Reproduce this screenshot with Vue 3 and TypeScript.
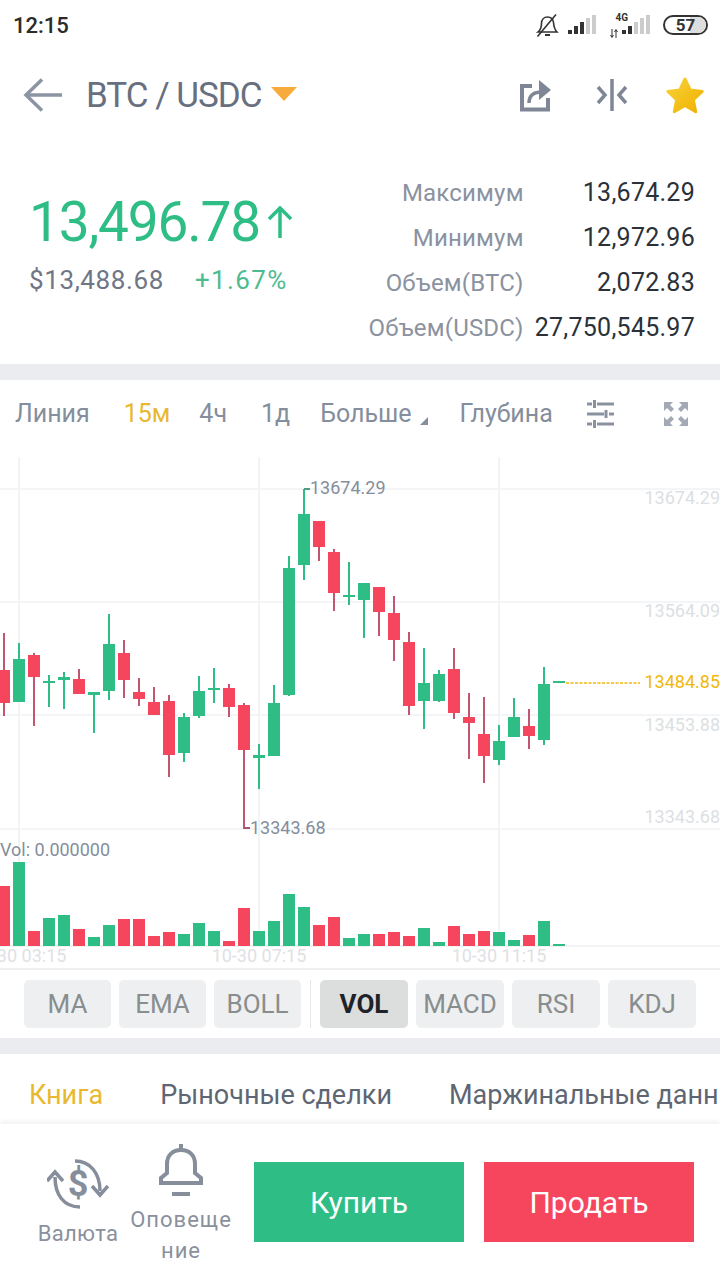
<script setup lang="ts">
interface Candle {
	x: number
	up: boolean
	high: number
	low: number
	top: number
	bottom: number
	vol: number
}

// [up, wick top, wick bottom, body top, body bottom, volume height]
const // prettier-ignore
	raw: [number, number, number, number, number, number][] = [
	[0,633,716,670,703,60],[1,643,702,659,702,84],[0,653,726,655,677,15],[1,675,707,681,683,28],
	[1,672,709,677,680,31],[0,669,694,679,694,17],[1,692,733,692,695,9],[1,614,700,644,691,21],
	[0,640,698,653,680,27],[0,678,706,692,699,27],[0,687,715,702,715,10],[0,695,777,701,755,14],
	[1,713,762,717,753,12],[1,676,718,691,716,23],[1,668,703,688,690,15],[0,684,717,688,707,5],
	[0,703,829,705,750,38],[1,744,789,755,758,15],[1,685,756,703,756,25],[1,556,696,568,695,52],
	[1,489,580,514,565,39],[0,521,561,521,547,21],[0,549,611,552,593,29],[1,562,605,595,597,8],
	[1,583,638,583,600,12],[0,587,636,587,612,12],[0,596,661,613,640,14],[0,632,715,642,706,10],
	[1,648,729,683,701,18],[1,670,702,674,701,4],[0,648,719,669,713,20],[0,693,759,717,723,12],
	[0,697,783,734,756,15],[1,725,765,741,760,14],[1,698,737,717,737,6],[0,709,749,726,736,11],
	[1,667,745,684,740,25],[1,681,683,681,683,2]
]

const candles: Candle[] = raw.map((c, i) => ({
	x: 4 + 15 * i,
	up: c[0] === 1,
	high: c[1],
	low: c[2],
	top: c[3],
	bottom: c[4],
	vol: c[5]
}))

const stats = [
	{ label: 'Максимум', value: '13,674.29' },
	{ label: 'Минимум', value: '12,972.96' },
	{ label: 'Объем(BTC)', value: '2,072.83' },
	{ label: 'Объем(USDC)', value: '27,750,545.97' }
]

const gridY = [489, 602, 715, 829]
const gridX = [19, 259, 499]
const axisLabels = [
	{ y: 504, text: '13674.29' },
	{ y: 617, text: '13564.09' },
	{ y: 731, text: '13453.88' },
	{ y: 823, text: '13343.68' }
]
const dates = [
	{ x: 19, text: '10-30 03:15' },
	{ x: 259, text: '10-30 07:15' },
	{ x: 499, text: '10-30 11:15' }
]
const indicatorsLeft = ['MA', 'EMA', 'BOLL']
const indicatorsRight = ['MACD', 'RSI', 'KDJ']
</script>

<template>
	<div class="page">
		<div class="status-bar">
			<span class="time">12:15</span>
			<div class="status-icons">
				<svg class="mute" width="23" height="23" viewBox="0 0 23 23" fill="none" stroke="#333" stroke-width="1.6">
					<path d="M2 18c2.500-2 3.500-4 3.500-8.500C5.500 5.500 8 3 11.500 3s5.500 2 6 5.500c.3 4 1 7 3.500 9.500z" />
					<path d="M9 21h5" stroke-width="2" />
					<path d="M1.500 22.500 20 .5" />
				</svg>
				<svg class="signal" width="28" height="20" viewBox="0 0 28 20">
					<rect x="0" y="15" width="4" height="4" fill="#333" />
					<rect x="6" y="11" width="4" height="8" fill="#333" />
					<rect x="12" y="7" width="4" height="12" fill="#333" />
					<rect x="18" y="3" width="4" height="16" fill="#ccc" />
					<rect x="24" y="0" width="4" height="19" fill="#ccc" />
				</svg>
				<div class="net">
					<span class="net-label">4G</span>
					<svg class="net-arrows" width="8" height="9" viewBox="0 0 8 9" fill="none" stroke="#333" stroke-width="1">
						<path d="M2 0v8M.5 6 2 8.500 3.500 6" />
						<path d="M6 9V1M4.500 3 6 .5 7.500 3" />
					</svg>
				</div>
				<svg class="signal-second" width="30" height="20" viewBox="0 0 30 20">
					<rect x="1" y="15" width="4" height="4" fill="#333" />
					<rect x="7" y="11" width="4" height="8" fill="#333" />
					<rect x="13" y="7" width="4" height="12" fill="#ccc" />
					<rect x="19" y="3" width="4" height="16" fill="#ccc" />
					<rect x="25" y="0" width="4" height="19" fill="#ccc" />
				</svg>
				<div class="battery"><span class="battery-fill"></span><span class="battery-text">57</span></div>
			</div>
		</div>

		<div class="header">
			<svg class="back" width="40" height="34" viewBox="0 0 40 34" fill="none" stroke="#8c94a3" stroke-width="3.500">
				<path d="M39 17H3" />
				<path d="M19 1.500 3 17l16 15.500" />
			</svg>
			<span class="pair">BTC / USDC</span>
			<span class="caret"></span>
			<div class="header-actions">
				<svg width="34" height="34" viewBox="0 0 34 34" fill="none" stroke="#7f8796" stroke-width="4">
					<path d="M14 8H4v23.500h26V20" />
					<path d="M11 25c0-8 5-11 13-11" stroke-width="3.500" />
					<path d="M21 2 33 12 21 22z" fill="#7f8796" stroke="none" />
				</svg>
				<svg class="compare" width="32" height="34" viewBox="0 0 32 34" fill="none" stroke="#7f8796" stroke-width="3.500">
					<path d="M16 1v32" stroke-width="3.500" />
					<path d="M2 9l7 8-7 8" />
					<path d="M30 9l-7 8 7 8" />
				</svg>
				<svg class="star" width="40" height="38" viewBox="0 0 40 38">
					<defs>
						<linearGradient id="star-fill" x1="0" y1="0" x2="1" y2="1">
							<stop offset="0" stop-color="#f8d33a" />
							<stop offset="1" stop-color="#f0b000" />
						</linearGradient>
					</defs>
					<path
						d="M20 3l5.200 11 12 1.500-8.800 8.200 2.300 12L20 29.500 9.300 35.700l2.300-12-8.800-8.200 12-1.500z"
						fill="url(#star-fill)"
						stroke="url(#star-fill)"
						stroke-width="3"
						stroke-linejoin="round"
					/>
				</svg>
			</div>
		</div>

		<div class="summary">
			<div class="summary-left">
				<div class="price-row">
					<span class="price">13,496.78</span>
					<svg width="26" height="32" viewBox="0 0 26 32" fill="none" stroke="#2ebd85" stroke-width="3.500">
						<path d="M13 32V3" />
						<path d="M2 13 13 2l11 11" />
					</svg>
				</div>
				<div class="sub-row">
					<span class="fiat">$13,488.68</span>
					<span class="change">+1.67%</span>
				</div>
			</div>
			<div class="summary-right">
				<template v-for="s in stats" :key="s.label">
					<span class="stat-label">{{ s.label }}</span>
					<span class="stat-value">{{ s.value }}</span>
				</template>
			</div>
		</div>

		<div class="divider"></div>

		<div class="chart-tabs">
			<span>Линия</span>
			<span class="active">15м</span>
			<span>4ч</span>
			<span>1д</span>
			<span class="more">Больше<i class="more-mark"></i></span>
			<span>Глубина</span>
			<svg class="filter" width="27" height="28" viewBox="0 0 27 28" fill="none" stroke="#8a92a0" stroke-width="3.500">
				<path d="M0 4h5M10 4h17M7.500 0v8" stroke-width="3" />
				<path d="M0 14h17M22 14h5M19 10v8" stroke-width="3" />
				<path d="M0 24h5M10 24h17M7.500 20v8" stroke-width="3" />
			</svg>
			<svg class="expand" width="26" height="26" viewBox="0 0 26 26" fill="#a3a9b5">
				<path d="M1 1h9L7 4l4 4-3 3-4-4-3 3z" />
				<path d="M25 1h-9l3 3-4 4 3 3 4-4 3 3z" />
				<path d="M1 25h9l-3-3 4-4-3-3-4 4-3-3z" />
				<path d="M25 25h-9l3-3-4-4 3-3 4 4 3-3z" />
			</svg>
		</div>

		<svg class="chart" width="720" height="511" viewBox="0 457 720 511">
			<line v-for="y in gridY" :key="'h' + y" x1="0" x2="720" :y1="y" :y2="y" stroke="#f4f5f7" stroke-width="2" />
			<line v-for="x in gridX" :key="'v' + x" :x1="x" :x2="x" y1="457" y2="946" stroke="#f2f3f5" stroke-width="2" />
			<line x1="0" x2="720" y1="946" y2="946" stroke="#f2f3f5" stroke-width="2" />

			<g v-for="c in candles" :key="c.x">
				<rect
					:x="c.x - 1"
					:y="c.high"
					width="2"
					:height="c.low - c.high"
					:fill="c.up ? '#2ebd85' : '#c2556f'"
				/>
				<rect
					:x="c.x - 6"
					:y="c.top"
					width="12"
					:height="c.bottom - c.top"
					:fill="c.up ? '#2ebd85' : '#f6465d'"
				/>
				<rect
					:x="c.x - 6"
					:y="946 - c.vol"
					width="12"
					:height="c.vol"
					:fill="c.up ? '#2ebd85' : '#f6465d'"
				/>
			</g>

			<line x1="304" x2="310" y1="489" y2="489" stroke="#4f9c84" stroke-width="2" />
			<line x1="244" x2="250" y1="828" y2="828" stroke="#a5566e" stroke-width="2" />
			<text class="mark" x="310" y="494">13674.29</text>
			<text class="mark" x="250" y="834">13343.68</text>
			<text class="mark" x="0" y="856">Vol: 0.000000</text>

			<text v-for="a in axisLabels" :key="a.text" class="axis" x="644.5" :y="a.y">{{ a.text }}</text>
			<line x1="566" x2="640" y1="683" y2="683" stroke="#f0b90b" stroke-width="1.500" stroke-dasharray="3 1.500" />
			<text class="axis last" x="644.5" y="688">13484.85</text>
			<text v-for="d in dates" :key="d.text" class="date" :x="d.x" y="962" text-anchor="middle">{{ d.text }}</text>
		</svg>

		<div class="indicators">
			<span v-for="n in indicatorsLeft" :key="n" class="indicator">{{ n }}</span>
			<span class="separator"></span>
			<span class="indicator selected">VOL</span>
			<span v-for="n in indicatorsRight" :key="n" class="indicator">{{ n }}</span>
		</div>

		<div class="divider"></div>

		<div class="book-tabs">
			<span class="active">Книга</span>
			<span>Рыночные сделки</span>
			<span>Маржинальные данные</span>
		</div>

		<div class="footer">
			<div class="footer-item currency">
				<svg width="62" height="50" viewBox="0 0 62 50" fill="none" stroke="#868e9c" stroke-width="3.500">
					<path d="M28 2c15 0 25 12 25 30" />
					<path d="M45 27l8 9 8-9" />
					<path d="M33 48C17 48 8 36 8 18" />
					<path d="M0 22l8-9 8 9" />
					<text class="dollar" x="31" y="37" text-anchor="middle">$</text>
				</svg>
				<span>Валюта</span>
			</div>
			<div class="footer-item alert">
				<svg width="44" height="52" viewBox="0 0 44 52" fill="none" stroke="#868e9c" stroke-width="4">
					<path d="M22 0v6" />
					<path d="M2 39h40v-5l-6-5V20c0-9-6-14-14-14S8 11 8 20v9l-6 5z" />
					<path d="M13 50h18" />
				</svg>
				<span>Оповеще<br />ние</span>
			</div>
			<button class="trade buy">Купить</button>
			<button class="trade sell">Продать</button>
		</div>
	</div>
</template>

<style scoped>
.page {
	width: 720px;
	height: 1280px;
	overflow: hidden;
	background: #fff;
	font-family: Roboto, sans-serif;
	color: #848e9c;
}
.status-bar {
	height: 50px;
	display: flex;
	align-items: center;
	justify-content: space-between;
	padding: 0 12px 0 13px;
	box-sizing: border-box;
}
.time {
	font-size: 22px;
	font-weight: 500;
	color: #2b2b2b;
}
.status-icons {
	display: flex;
	align-items: center;
}
.mute {
	margin-right: 9px;
}
.net {
	width: 18px;
	margin-left: 14px;
	display: flex;
	flex-direction: column;
	align-items: flex-end;
	color: #333;
	line-height: 1;
}
.net-label {
	font-size: 10px;
	font-weight: 700;
}
.net-arrows {
	margin-top: 6px;
	align-self: flex-start;
}
.signal-second {
	margin-left: -7px;
}
.battery {
	position: relative;
	width: 45px;
	height: 20px;
	margin-left: 12px;
	box-sizing: border-box;
	border: 2px solid #333;
	border-radius: 10px;
	overflow: hidden;
	display: flex;
	align-items: center;
	justify-content: center;
}
.battery-fill {
	position: absolute;
	right: 0;
	top: 0;
	bottom: 0;
	width: 16px;
	background: #dedede;
}
.battery-text {
	position: relative;
	font-size: 17px;
	font-weight: 700;
	color: #333;
}
.header {
	height: 90px;
	display: flex;
	align-items: center;
	padding: 0 15px 0 23px;
	box-sizing: border-box;
}
.pair {
	margin-left: 23px;
	font-size: 35px;
	letter-spacing: -1px;
	color: #687080;
}
.caret {
	width: 0;
	height: 0;
	margin-left: 9px;
	margin-bottom: 2px;
	border-left: 13px solid transparent;
	border-right: 13px solid transparent;
	border-top: 14px solid #f7ab3c;
}
.header-actions {
	margin-left: auto;
	display: flex;
	align-items: center;
}
.compare {
	margin-left: 44px;
}
.star {
	margin-left: 37px;
}
.summary {
	height: 224px;
	display: flex;
	justify-content: space-between;
	padding: 30px 25px 0 29px;
	box-sizing: border-box;
}
.summary-left {
	padding-top: 22px;
}
.price-row {
	display: flex;
	align-items: center;
	height: 60px;
}
.price {
	font-size: 55px;
	letter-spacing: -1.200px;
	color: #2ebd85;
	margin-right: 7px;
}
.sub-row {
	display: flex;
	align-items: center;
	margin-top: 10px;
	height: 36px;
	font-size: 26px;
}
.fiat {
	color: #6f7685;
	letter-spacing: 0.600px;
}
.change {
	margin-left: 31px;
	color: #4dbb90;
	letter-spacing: 1.400px;
}
.summary-right {
	display: grid;
	grid-template-columns: auto auto;
	justify-content: end;
	column-gap: 11px;
	grid-auto-rows: 45px;
	align-items: center;
	font-size: 25px;
	text-align: right;
}
.stat-label {
	color: #8b929f;
	font-size: 24px;
	letter-spacing: 0.200px;
}
.stat-value {
	color: #2b3139;
	letter-spacing: 0.260px;
}
.divider {
	height: 16px;
	background: #eaecef;
}
.chart-tabs {
	height: 77px;
	display: flex;
	align-items: center;
	padding: 0 31px 10px 15px;
	box-sizing: border-box;
	font-size: 25px;
	color: #848e9c;
}
.chart-tabs span:nth-child(1) {
	margin-right: 34px;
}
.chart-tabs span:nth-child(2) {
	margin-right: 29px;
}
.chart-tabs span:nth-child(3) {
	margin-right: 34px;
}
.chart-tabs span:nth-child(4) {
	margin-right: 30px;
}
.chart-tabs .active {
	color: #e8b92f;
}
.chart-tabs .more {
	position: relative;
	margin-right: 48px;
}
.more-mark {
	position: absolute;
	right: -16px;
	bottom: 3px;
	width: 0;
	height: 0;
	border-left: 8px solid transparent;
	border-bottom: 8px solid #848e9c;
}
.filter {
	margin-left: auto;
}
.expand {
	margin-left: 49px;
}
.chart {
	display: block;
}
.mark {
	font-size: 18px;
	fill: #848e9c;
}
.axis {
	font-size: 18px;
	fill: #dcdfe3;
}
.axis.last {
	fill: #f0b90b;
}
.date {
	font-size: 18px;
	fill: #dfe1e5;
}
.indicators {
	height: 70px;
	box-sizing: border-box;
	border-top: 2px solid #eeeff1;
	display: flex;
	align-items: center;
	padding: 0 24px;
	gap: 8px;
}
.indicator {
	width: 88px;
	height: 48px;
	display: flex;
	align-items: center;
	justify-content: center;
	border-radius: 5px;
	background: #eeeff0;
	font-size: 26px;
	color: #888d8e;
}
.indicator:first-child {
	width: 87px;
}
.indicator:nth-child(2),
.indicator:nth-child(3) {
	width: 87px;
}
.indicator.selected {
	background: #dcdddd;
	color: #1e2329;
	font-weight: 700;
}
.separator {
	width: 1px;
	height: 48px;
	margin: 0 1px;
	background: #e6e7e9;
}
.book-tabs {
	height: 70px;
	display: flex;
	align-items: center;
	gap: 57px;
	padding: 12px 0 0 29px;
	box-sizing: border-box;
	white-space: nowrap;
	font-size: 27px;
	color: #5e6673;
	overflow: hidden;
}
.book-tabs .active {
	color: #e8b92f;
}
.footer {
	height: 156px;
	display: flex;
	align-items: flex-start;
	position: relative;
	box-shadow: 0 -3px 4px rgba(0, 0, 0, 0.05);
}
.footer-item {
	display: flex;
	flex-direction: column;
	align-items: center;
	font-size: 22px;
	color: #8a909c;
	text-align: center;
}
.currency {
	padding: 35px 0 0 37px;
	width: 82px;
}
.currency span {
	margin-top: 12px;
	letter-spacing: 0.300px;
}
.alert {
	width: 104px;
	margin-left: 10px;
	padding-top: 20px;
	line-height: 31px;
	letter-spacing: 1px;
}
.alert span {
	margin-top: 8px;
}
.dollar {
	font-size: 36px;
	font-weight: 700;
	fill: #868e9c;
	stroke: none;
}
.trade {
	width: 210px;
	height: 80px;
	margin-top: 38px;
	border: none;
	font-family: inherit;
	font-size: 30px;
	color: #fff;
}
.buy {
	margin-left: 21px;
	background: #2ebd85;
}
.sell {
	margin-left: 20px;
	background: #f6465d;
}
</style>
